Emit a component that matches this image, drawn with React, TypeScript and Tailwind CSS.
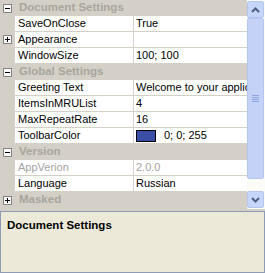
import React from 'react';

type Row =
  | { kind: 'cat'; label: string; open: boolean }
  | { kind: 'prop'; name: string; value?: string; expand?: boolean; dim?: boolean; swatch?: string };

const rows: Row[] = [
  { kind: 'cat', label: 'Document Settings', open: true },
  { kind: 'prop', name: 'SaveOnClose', value: 'True' },
  { kind: 'prop', name: 'Appearance', value: '', expand: true },
  { kind: 'prop', name: 'WindowSize', value: '100; 100' },
  { kind: 'cat', label: 'Global Settings', open: true },
  { kind: 'prop', name: 'Greeting Text', value: 'Welcome to your application!' },
  { kind: 'prop', name: 'ItemsInMRUList', value: '4' },
  { kind: 'prop', name: 'MaxRepeatRate', value: '16' },
  { kind: 'prop', name: 'ToolbarColor', value: '0; 0; 255', swatch: '#3a4ea6' },
  { kind: 'cat', label: 'Version', open: true },
  { kind: 'prop', name: 'AppVerion', value: '2.0.0', dim: true },
  { kind: 'prop', name: 'Language', value: 'Russian' },
  { kind: 'cat', label: 'Masked', open: false },
];

function ToggleBox({ open }: { open: boolean }) {
  return (
    <div className="relative w-[9px] h-[9px] border border-[#848284] bg-white">
      <div className="absolute left-[1px] top-[3px] w-[5px] h-px bg-black" />
      {!open && <div className="absolute left-[3px] top-[1px] w-px h-[5px] bg-black" />}
    </div>
  );
}

function Chevron({ up }: { up: boolean }) {
  return (
    <svg width="9" height="6" viewBox="0 0 9 6">
      <path
        d={up ? 'M1 5 L4.5 1.5 L8 5' : 'M1 1 L4.5 4.5 L8 1'}
        fill="none"
        stroke="#4d6185"
        strokeWidth="2"
      />
    </svg>
  );
}

function ScrollButton({ up }: { up: boolean }) {
  return (
    <div className="h-[17px] flex items-center justify-center rounded-[2px] border border-[#b4c6f0] bg-[#c6d5fa]">
      <Chevron up={up} />
    </div>
  );
}

export default function App() {
  return (
    <div
      className="w-[265px] h-[273px] bg-[#d4d0c8] flex flex-col overflow-hidden text-[11px] text-black"
      style={{ fontFamily: '"Liberation Sans", Arial, sans-serif' }}
    >
      {/* grid + scrollbar */}
      <div className="h-[209px] flex">
        <div className="w-[247px] flex flex-col">
          {rows.map((r, i) =>
            r.kind === 'cat' ? (
              <div key={i} className="h-4 flex items-center bg-[#d4d0c8]">
                <div className="w-[15px] flex justify-center">
                  <ToggleBox open={r.open} />
                </div>
                <span className="pl-[4px] font-bold text-[11.5px] text-[#a8a59d] whitespace-nowrap">{r.label}</span>
              </div>
            ) : (
              <div key={i} className="h-4 flex border-b border-[#d4d0c8]">
                <div className="w-[15px] flex items-center justify-center bg-[#d4d0c8]">
                  {r.expand && <ToggleBox open={false} />}
                </div>
                <div className={`w-[118px] bg-white pl-[3px] leading-[15px] whitespace-nowrap ${r.dim ? 'text-[#a3a3a3]' : ''}`}>
                  {r.name}
                </div>
                <div className="w-px bg-[#d4d0c8]" />
                <div className={`flex-1 bg-white pl-[2px] leading-[15px] whitespace-nowrap overflow-hidden flex items-center gap-[8px] ${r.dim ? 'text-[#a3a3a3]' : ''}`}>
                  {r.swatch && (
                    <div className="w-[20px] h-[12px] border border-black" style={{ backgroundColor: r.swatch }} />
                  )}
                  <span>{r.value}</span>
                </div>
              </div>
            )
          )}
        </div>
        <div className="w-[17px] flex flex-col bg-[#fbfbf8] pt-px pb-px">
          <ScrollButton up />
          <div className="flex-1 flex flex-col">
            <div className="h-[161px] flex items-center justify-center rounded-[2px] border border-[#b4c6f0] bg-[#c4d2f7]">
              <div className="flex flex-col gap-px">
                <div className="w-[7px] h-px bg-[#8ca4e0]" />
                <div className="w-[7px] h-px bg-[#8ca4e0]" />
                <div className="w-[7px] h-px bg-[#8ca4e0]" />
                <div className="w-[7px] h-px bg-[#8ca4e0]" />
              </div>
            </div>
          </div>
          <ScrollButton up={false} />
        </div>
        <div className="w-px bg-[#fbfbf8]" />
      </div>

      {/* description panel */}
      <div className="mt-[2px] flex-1 bg-[#ece9d8] border border-[#8e9bb0] px-[6px] pt-[6px]">
        <div className="font-bold text-[11.5px] leading-[14px]">Document Settings</div>
      </div>
    </div>
  );
}
